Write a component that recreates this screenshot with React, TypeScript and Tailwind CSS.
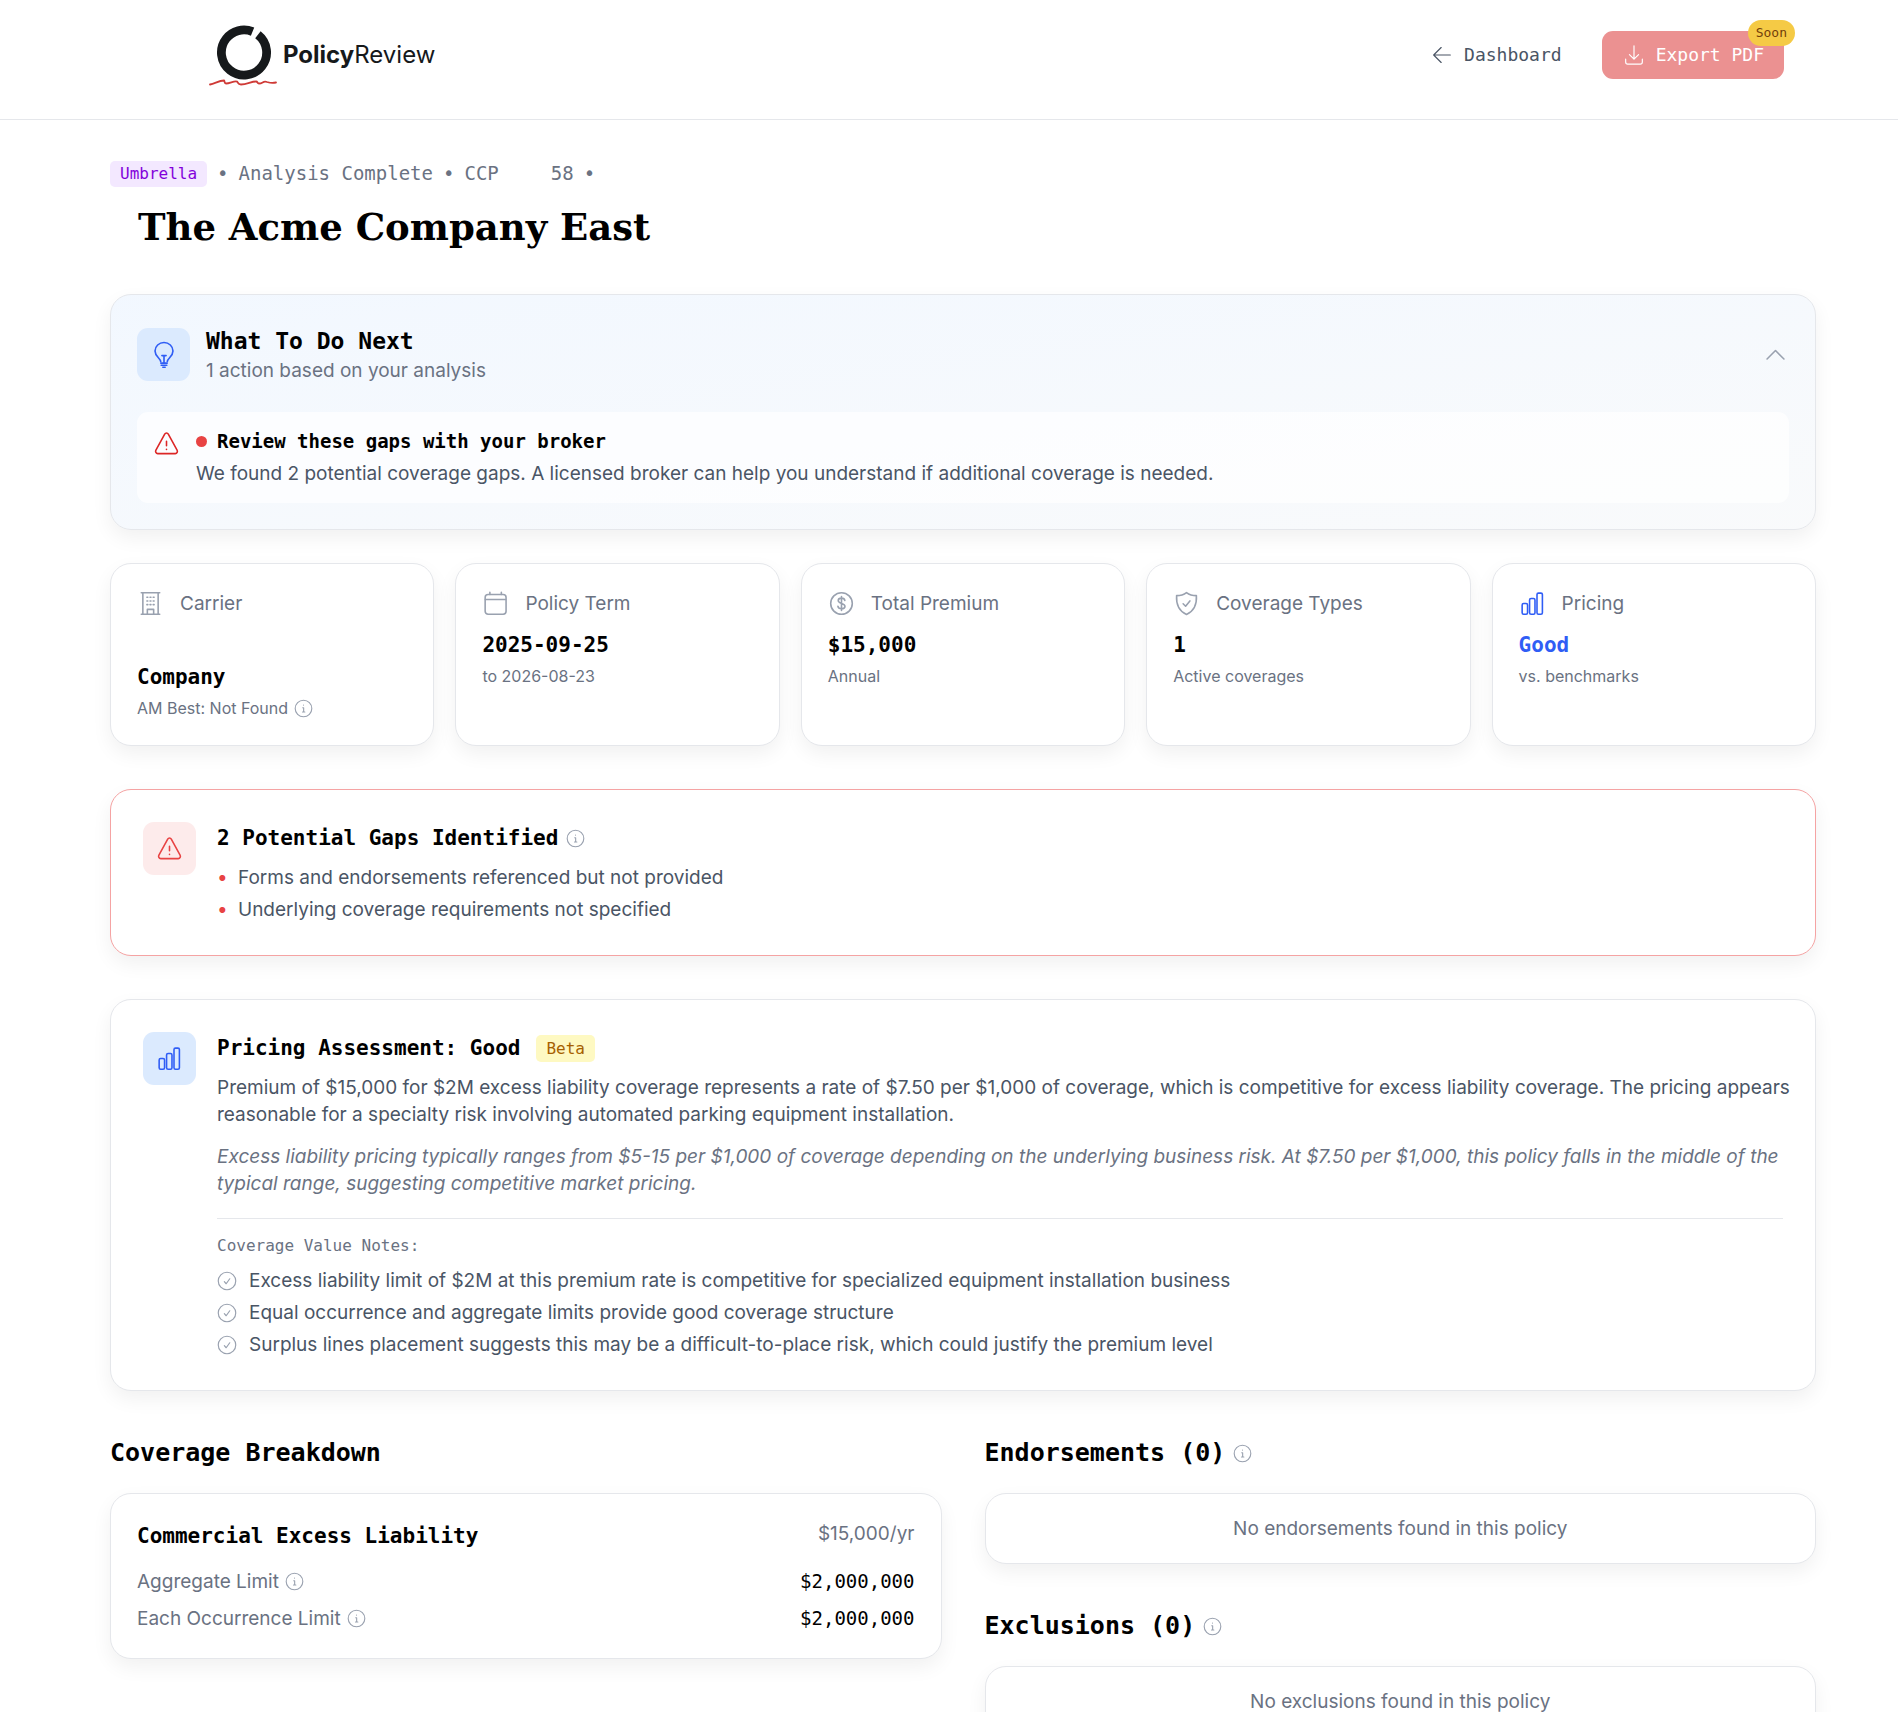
import { useState, type ReactNode } from 'react';

const mono = "font-['DejaVu_Sans_Mono',monospace]";

interface IconProps {
  className?: string;
}

function Icon({ className, children }: { className?: string; children: ReactNode }) {
  return (
    <svg
      viewBox="0 0 24 24"
      fill="none"
      stroke="currentColor"
      strokeWidth={1.4}
      strokeLinecap="round"
      strokeLinejoin="round"
      aria-hidden="true"
      className={`shrink-0 ${className ?? ''}`}
    >
      {children}
    </svg>
  );
}

function BulbIcon({ className }: IconProps) {
  return (
    <Icon className={className}>
      <path d="M9.2 17.7c-.1-3-4.9-4.3-4.9-9.2a7.7 7.2 0 0 1 15.400 0c0 4.900-4.800 6.200-4.900 9.200" />
      <path d="M9.300 19h5.400M9.600 20.800h4.800M11 22.500h2M12 18.500v-6M10.200 12.500h3.600" />
    </Icon>
  );
}

function WarningIcon({ className }: IconProps) {
  return (
    <Icon className={className}>
      <path d="M10.400 3.600 2.600 17.900c-.8 1.400.1 3.100 1.600 3.100h15.600c1.500 0 2.400-1.700 1.600-3.100L13.600 3.600c-.7-1.300-2.500-1.300-3.200 0Z" />
      <path d="M12 10v4M12 17.200v.2" />
    </Icon>
  );
}

function BuildingIcon({ className }: IconProps) {
  return (
    <Icon className={className}>
      <path d="M3.800 2.500h16.400M3.800 21.500h16.400M5.200 2.500v19M18.800 2.500v19M9.200 21.500v-4.300h5.600v4.300" />
      <path d="M8.800 6.500h.8M11.600 6.500h.8M14.400 6.500h.8M8.800 9.800h.8M11.600 9.800h.8M14.400 9.800h.8M8.800 13h.8M11.600 13h.8M14.400 13h.8" />
    </Icon>
  );
}

function CalendarIcon({ className }: IconProps) {
  return (
    <Icon className={className}>
      <rect x="2.800" y="4" width="18.600" height="17.500" rx="2.600" />
      <path d="M3 8.500h18M7 2v2M17.200 2v2" />
    </Icon>
  );
}

function DollarIcon({ className }: IconProps) {
  return (
    <Icon className={className}>
      <circle cx="12" cy="12" r="9.600" />
      <path d="M15 9.400c-.2-1.400-1.400-2.200-3-2.200s-2.900.9-2.900 2.200c0 3.300 6 1.700 6 5 0 1.400-1.300 2.300-3.100 2.300S9 15.800 8.800 14.400M12 5.800v12.400" />
    </Icon>
  );
}

function ShieldIcon({ className }: IconProps) {
  return (
    <Icon className={className}>
      <path d="M12 2.300c2.500 1.900 5.400 2.700 8.800 2.700.5 8-1.800 13.600-8.800 16.700C5 18.600 2.700 13 3.200 5 6.600 5 9.500 4.200 12 2.300Z" />
      <path d="m9 12.200 2.200 2.200 3.800-4.700" />
    </Icon>
  );
}

function BarsIcon({ className }: IconProps) {
  return (
    <Icon className={className}>
      <rect x="2.800" y="12" width="4.800" height="9.500" rx="1.300" />
      <rect x="9.400" y="7.500" width="4.800" height="14" rx="1.300" />
      <rect x="16" y="2.800" width="4.800" height="18.700" rx="1.300" />
    </Icon>
  );
}

function InfoIcon({ className }: IconProps) {
  return (
    <Icon className={className}>
      <circle cx="12" cy="12" r="10.500" />
      <path d="M11 11h1.200v5.500M10.700 16.500h3M12 7.500v.2" />
    </Icon>
  );
}

function CheckIcon({ className }: IconProps) {
  return (
    <Icon className={className}>
      <circle cx="12" cy="12" r="10.500" />
      <path d="m8.800 12.800 2.200 2.500 4.300-6" />
    </Icon>
  );
}

function Logo() {
  return (
    <a href="#" aria-label="PolicyReview" className="flex items-center gap-1.5 text-[#16191b]">
      <svg viewBox="0 0 68 62" className="h-[62px] w-[68px]" aria-hidden="true">
        <circle
          cx="35"
          cy="28.500"
          r="22.600"
          fill="none"
          stroke="#16191b"
          strokeWidth="8.800"
          pathLength="360"
          strokeDasharray="344 16"
          transform="rotate(-52 35 28.500)"
        />
        <path
          d="M1 60.500c5-1 9-4 14-4 1 1 0 3 2 3 4 0 8-3 11-2 1 1 1 3 4 3 6 0 10-3 15-3 2 0 1 2 3 2 4 0 4-3 8-1.500 2 .5 4 1.500 9 .5"
          fill="none"
          stroke="#cf3a36"
          strokeWidth="1.800"
          strokeLinecap="round"
        />
      </svg>
      <span className="text-2xl">
        <b>Policy</b>Review
      </span>
    </a>
  );
}

function InfoButton({ label }: { label: string }) {
  return (
    <button type="button" aria-label={label} className="text-gray-400">
      <InfoIcon className="size-[19px]" />
    </button>
  );
}

function Card({ className, children }: { className: string; children: ReactNode }) {
  return (
    <div className={`rounded-[21px] border shadow-[0_8px_20px_rgba(0,0,0,0.06)] ${className}`}>{children}</div>
  );
}

interface StatProps {
  icon: ReactNode;
  label: string;
  value: ReactNode;
  note: ReactNode;
  valueColor?: string;
}

function Stat({ icon, label, value, note, valueColor = 'text-black' }: StatProps) {
  return (
    <Card className="border-gray-200 bg-white p-[26px]">
      <div className="mb-3 flex items-center gap-4 text-gray-500">
        {icon}
        {label}
      </div>
      <div className={`${mono} text-[21px] leading-8 font-bold ${valueColor}`}>{value}</div>
      <div className="mt-1 flex items-center gap-1.5 text-base leading-[22px] text-gray-500">{note}</div>
    </Card>
  );
}

function EmptySection({ title, text }: { title: string; text: string }) {
  return (
    <section>
      <h2 className={`${mono} mb-[21px] flex items-center gap-2 text-[25px] leading-[38px] font-bold`}>
        {title}
        <InfoButton label={`About ${title}`} />
      </h2>
      <Card className="border-gray-200 bg-white p-[21px] text-center text-gray-500">{text}</Card>
    </section>
  );
}

const gaps = [
  'Forms and endorsements referenced but not provided',
  'Underlying coverage requirements not specified',
];

const valueNotes = [
  'Excess liability limit of $2M at this premium rate is competitive for specialized equipment installation business',
  'Equal occurrence and aggregate limits provide good coverage structure',
  'Surplus lines placement suggests this may be a difficult-to-place risk, which could justify the premium level',
];

const limits = [
  { name: 'Aggregate Limit', amount: '$2,000,000' },
  { name: 'Each Occurrence Limit', amount: '$2,000,000' },
];

export default function App() {
  const [open, setOpen] = useState(true);

  return (
    <div className="h-screen overflow-hidden bg-white font-['Inter',sans-serif] text-[19px] leading-[27px] text-black">
      <header className="flex h-[120px] items-start justify-between border-b border-gray-200 pr-[114px] pl-[209px]">
        <div className="pt-6">
          <Logo />
        </div>
        <div className={`${mono} flex items-center gap-10 pt-[31px] text-lg`}>
          <a href="#" className="flex items-center gap-3 text-gray-600">
            <Icon className="size-5">
              <path d="M22 12H2M11 3l-9 9 9 9" />
            </Icon>
            Dashboard
          </a>
          <button
            type="button"
            className="relative flex h-12 items-center gap-3 rounded-[11px] bg-[#eb9191] pr-5 pl-[22px] text-white"
          >
            <Icon className="size-5">
              <path d="M12 1v16M6.500 11.500 12 17l5.500-5.500M2 17v3.500C2 22 3 23 4.500 23h15c1.500 0 2.500-1 2.500-2.500V17" />
            </Icon>
            Export PDF
            <span className="absolute -top-[11px] -right-[11px] rounded-full bg-[#f5ca45] px-2 text-[13px] leading-[26px] text-yellow-900">
              Soon
            </span>
          </button>
        </div>
      </header>

      <main className="pr-[82px] pl-[110px]">
        <div className={`${mono} mt-10 flex items-center gap-2.5 text-gray-500`}>
          <span className="rounded-[5px] bg-purple-100 px-2.5 text-base leading-[26px] text-purple-700">Umbrella</span>
          <span>•</span>
          <span>Analysis Complete</span>
          <span>•</span>
          <span className="flex gap-[52px]">
            <span>CCP</span>
            <span>58</span>
          </span>
          <span>•</span>
        </div>
        <h1 className="mt-3.5 pl-7 font-['DejaVu_Serif',serif] text-[37px] leading-[53px] font-bold">
          The Acme Company East
        </h1>

        <Card className="mt-10 border-gray-200 bg-linear-to-br from-blue-50/80 to-gray-50 p-[26px]">
          <div className="flex items-center gap-4 py-1">
            <div className="flex size-[53px] items-center justify-center rounded-[11px] bg-blue-100 text-[#2f5df5]">
              <BulbIcon className="size-7" />
            </div>
            <div>
              <h2 className={`${mono} text-[23px] leading-8 font-bold`}>What To Do Next</h2>
              <p className="text-gray-500">1 action based on your analysis</p>
            </div>
            <button
              type="button"
              aria-label="Toggle actions"
              aria-expanded={open}
              onClick={() => setOpen(!open)}
              className="ml-auto text-gray-400"
            >
              <Icon className="size-[27px]">
                <path d="m4.500 16 7.500-7.500 7.500 7.500" />
              </Icon>
            </button>
          </div>
          {open && (
            <div className="mt-6 flex gap-4 rounded-[11px] bg-white/70 p-4">
              <WarningIcon className="mt-0.5 size-[27px] text-[#dc2626]" />
              <div>
                <h3 className={`${mono} flex items-center gap-2.5 font-bold`}>
                  <span className="size-[11px] rounded-full bg-[#e84343]" />
                  Review these gaps with your broker
                </h3>
                <p className="mt-[5px] text-gray-600">
                  We found 2 potential coverage gaps. A licensed broker can help you understand if additional coverage
                  is needed.
                </p>
              </div>
            </div>
          )}
        </Card>

        <div className="mt-[33px] grid grid-cols-5 gap-[21px]">
          <Stat
            icon={<BuildingIcon className="size-[27px] text-gray-400" />}
            label="Carrier"
            value={<p className="pt-8">Company</p>}
            note={
              <>
                AM Best: Not Found <InfoButton label="About AM Best" />
              </>
            }
          />
          <Stat
            icon={<CalendarIcon className="size-[27px] text-gray-400" />}
            label="Policy Term"
            value="2025-09-25"
            note="to 2026-08-23"
          />
          <Stat
            icon={<DollarIcon className="size-[27px] text-gray-400" />}
            label="Total Premium"
            value="$15,000"
            note="Annual"
          />
          <Stat
            icon={<ShieldIcon className="size-[27px] text-gray-400" />}
            label="Coverage Types"
            value="1"
            note="Active coverages"
          />
          <Stat
            icon={<BarsIcon className="size-[27px] text-[#2f5df5]" />}
            label="Pricing"
            value="Good"
            note="vs. benchmarks"
            valueColor="text-[#2f5df5]"
          />
        </div>

        <Card className="mt-[43px] flex items-start gap-[21px] border-[#f5a3a3] bg-white p-8">
          <div className="flex size-[53px] items-center justify-center rounded-[11px] bg-[#fdebeb] text-[#e84343]">
            <WarningIcon className="size-[27px]" />
          </div>
          <div>
            <h2 className={`${mono} flex items-center gap-2 text-[21px] leading-8 font-bold`}>
              2 Potential Gaps Identified
              <InfoButton label="About potential gaps" />
            </h2>
            <ul className="mt-2.5 space-y-[5px] text-gray-600">
              {gaps.map((gap) => (
                <li key={gap} className="flex gap-[11px]">
                  <span className="w-2.5 text-center text-[#e84343]">•</span>
                  {gap}
                </li>
              ))}
            </ul>
          </div>
        </Card>

        <Card className="mt-[43px] flex items-start gap-[21px] border-gray-200 bg-white py-8 pr-5 pl-8">
          <div className="flex size-[53px] shrink-0 items-center justify-center rounded-[11px] bg-blue-100 text-[#2f5df5]">
            <BarsIcon className="size-[27px]" />
          </div>
          <div className="flex-1">
            <h2 className={`${mono} flex items-center gap-4 text-[21px] leading-8 font-bold`}>
              Pricing Assessment: Good
              <span className="rounded-[5px] bg-yellow-100 px-2.5 text-base leading-[27px] font-normal text-yellow-700">
                Beta
              </span>
            </h2>
            <p className="mt-2.5 text-gray-600">
              Premium of $15,000 for $2M excess liability coverage represents a rate of $7.50 per $1,000 of coverage,
              which is competitive for excess liability coverage. The pricing appears reasonable for a specialty risk
              involving automated parking equipment installation.
            </p>
            <p className="mt-[15px] text-gray-500 italic">
              Excess liability pricing typically ranges from $5-15 per $1,000 of coverage depending on the underlying
              business risk. At $7.50 per $1,000, this policy falls in the middle of the typical range, suggesting
              competitive market pricing.
            </p>
            <div className="mt-[21px] mr-3 border-t border-gray-200 pt-4">
              <h3 className={`${mono} text-base leading-[22px] text-gray-500`}>Coverage Value Notes:</h3>
              <ul className="mt-2.5 space-y-[5px] text-gray-600">
                {valueNotes.map((note) => (
                  <li key={note} className="flex items-center gap-3">
                    <CheckIcon className="size-5 text-gray-400" />
                    {note}
                  </li>
                ))}
              </ul>
            </div>
          </div>
        </Card>

        <div className="mt-[43px] grid grid-cols-2 items-start gap-[43px]">
          <section>
            <h2 className={`${mono} mb-[21px] text-[25px] leading-[38px] font-bold`}>Coverage Breakdown</h2>
            <Card className="border-gray-200 bg-white p-[26px]">
              <div className="mb-4 flex items-start justify-between">
                <h3 className={`${mono} text-[21px] leading-8 font-bold`}>Commercial Excess Liability</h3>
                <span className="text-gray-500">$15,000/yr</span>
              </div>
              <div className="space-y-2.5">
                {limits.map((limit) => (
                  <div key={limit.name} className="flex items-center justify-between">
                    <span className="flex items-center gap-1.5 text-gray-500">
                      {limit.name}
                      <InfoButton label={`About ${limit.name}`} />
                    </span>
                    <span className={mono}>{limit.amount}</span>
                  </div>
                ))}
              </div>
            </Card>
          </section>
          <div className="space-y-[43px]">
            <EmptySection title="Endorsements (0)" text="No endorsements found in this policy" />
            <EmptySection title="Exclusions (0)" text="No exclusions found in this policy" />
          </div>
        </div>
      </main>
    </div>
  );
}
